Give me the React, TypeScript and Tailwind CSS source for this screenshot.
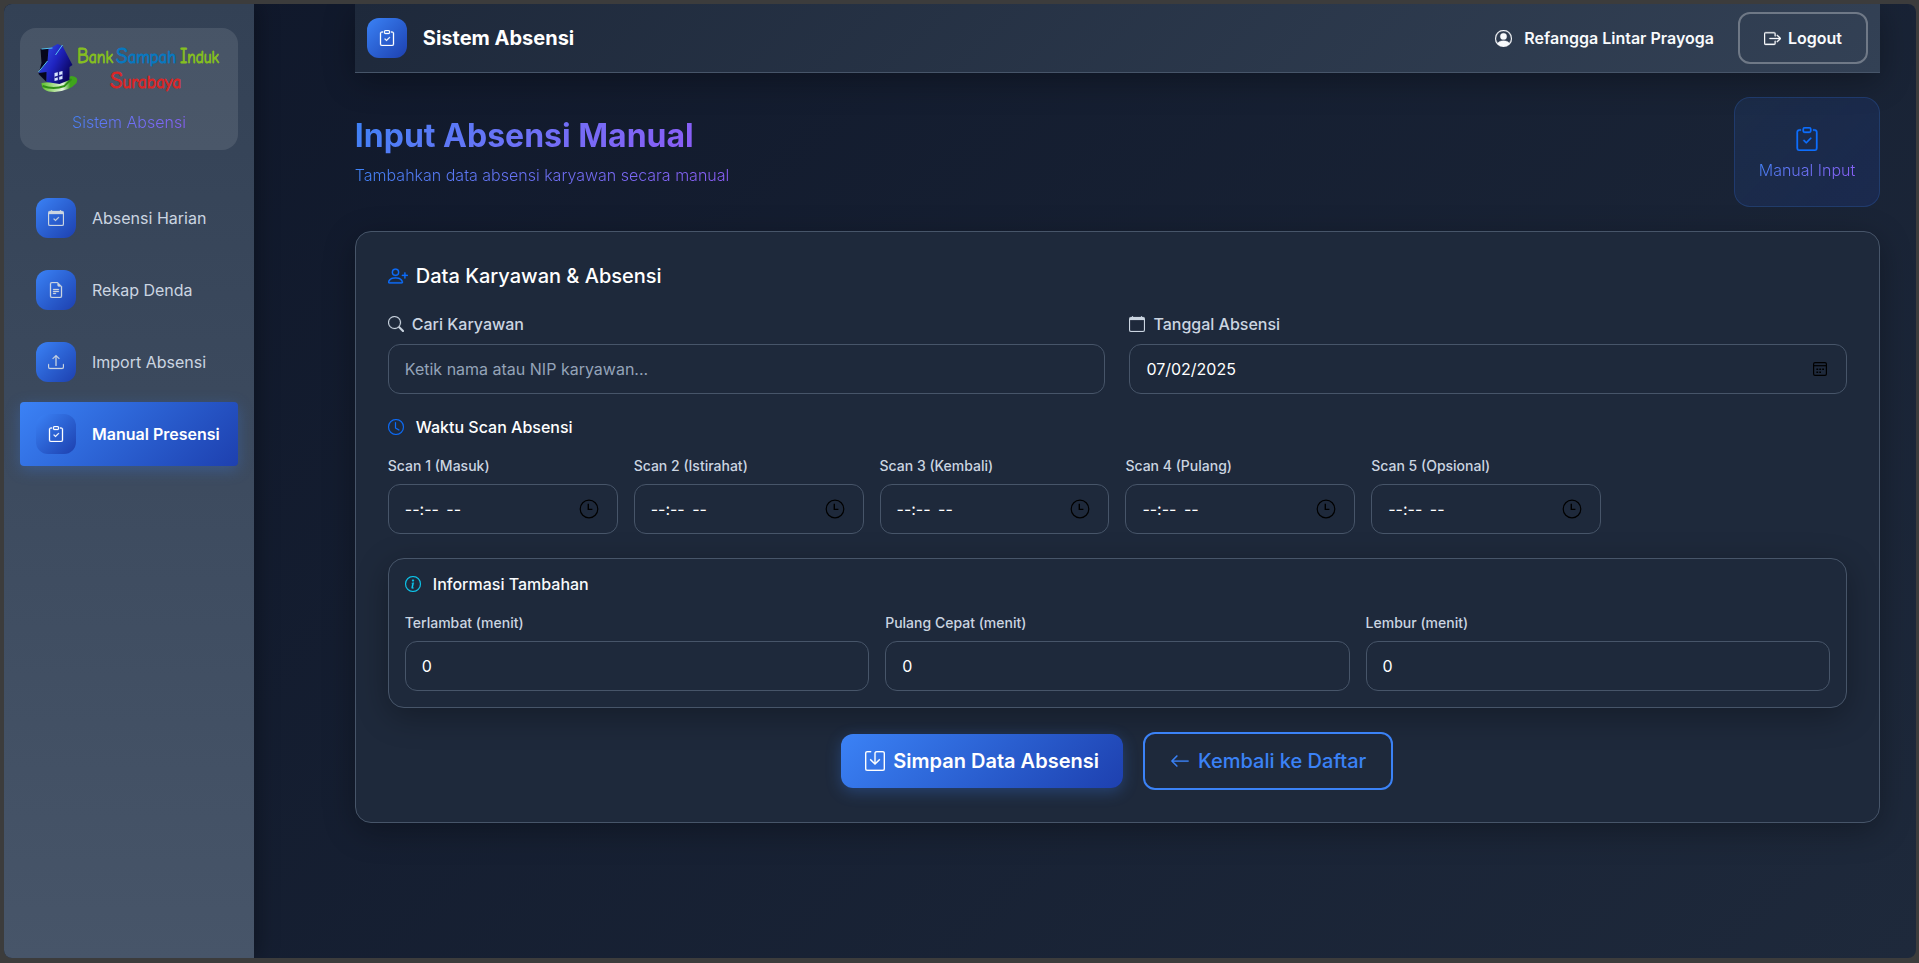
import type { ReactNode } from "react";
import type { IconType } from "react-icons";
import {
  BsArrowLeft,
  BsBoxArrowRight,
  BsCalendar,
  BsCalendarCheck,
  BsClipboardCheck,
  BsClock,
  BsFileEarmarkText,
  BsInfoCircle,
  BsPersonCircle,
  BsPersonPlus,
  BsSave,
  BsSearch,
  BsUpload,
} from "react-icons/bs";

const navItems: { label: string; icon: IconType; active?: boolean }[] = [
  { label: "Absensi Harian", icon: BsCalendarCheck },
  { label: "Rekap Denda", icon: BsFileEarmarkText },
  { label: "Import Absensi", icon: BsUpload },
  { label: "Manual Presensi", icon: BsClipboardCheck, active: true },
];

const scans = [
  "Scan 1 (Masuk)",
  "Scan 2 (Istirahat)",
  "Scan 3 (Kembali)",
  "Scan 4 (Pulang)",
  "Scan 5 (Opsional)",
];

const extras = ["Terlambat (menit)", "Pulang Cepat (menit)", "Lembur (menit)"];

const fieldClass =
  "flex h-[50px] w-full items-center rounded-xl border border-[#475569] bg-[#1e293b] px-4 text-base text-white";

function Logo() {
  return (
    <svg viewBox="0 0 190 54" className="ml-1 h-[54px] w-[190px] overflow-visible">
      <defs>
        <linearGradient id="house" x1="0" y1="0" x2="1" y2="0.6">
          <stop offset="0" stopColor="#3a5cf0" />
          <stop offset="0.55" stopColor="#1f24c0" />
          <stop offset="1" stopColor="#0b0560" />
        </linearGradient>
        <linearGradient id="lawn" x1="0" y1="0" x2="1" y2="0">
          <stop offset="0" stopColor="#5fc02c" />
          <stop offset="0.6" stopColor="#e6f5df" />
          <stop offset="0.8" stopColor="#3fa51c" />
        </linearGradient>
      </defs>
      <g transform="translate(1.5 3)">
        <path d="M4 40 Q4 49 17 49 Q32 48 39 40 Q42 34 34 33 L22 38Z" fill="url(#lawn)" />
        <path d="M5 43 Q16 47 27 43 L34 36" fill="none" stroke="#2f8f17" strokeWidth="2" />
        <path d="M3 6 L12 5 L10 20 L9 39 L1 31 L4 20Z" fill="#06061c" />
        <path d="M11 6 L20 1 L25 3 L35 22 L32 24 L32 37 L22 41 L9 39 L9 29 L1 30 L10 18Z" fill="url(#house)" />
        <path d="M4 6 L15 5 M1 29 L10 18 M18 12 L25 2" fill="none" stroke="#55c3ee" strokeWidth="1" />
        <path d="M17 30 L25 28 L25 36 L17 38Z" fill="#d7e6ff" />
        <path d="M21 28 V38 M17 34.5 L25 32" stroke="#1c1c8c" strokeWidth="1.4" />
      </g>
      <g className="font-['Comic_Neue','Comic_Sans_MS','Lato',cursive]" fontSize="18" strokeWidth="0.9">
        <text x="41" y="22.5" textLength="36" lengthAdjust="spacingAndGlyphs" fill="#86bf1f" stroke="#86bf1f">
          <tspan fontSize="22">B</tspan>ank
        </text>
        <text x="80" y="23" textLength="60" lengthAdjust="spacingAndGlyphs" fill="#0878c0" stroke="#0878c0">
          <tspan fontSize="23">S</tspan>ampah
        </text>
        <text x="144" y="22.5" textLength="39" lengthAdjust="spacingAndGlyphs" fill="#86bf1f" stroke="#86bf1f">
          <tspan fontSize="22">I</tspan>nduk
        </text>
        <text x="74" y="48" textLength="71" lengthAdjust="spacingAndGlyphs" fill="#da2626" stroke="#da2626">
          <tspan fontSize="24">S</tspan>urabaya
        </text>
      </g>
    </svg>
  );
}

function ChromeClock() {
  return (
    <svg viewBox="0 0 20 20" className="size-5 text-black" fill="none" stroke="currentColor">
      <circle cx="10" cy="10" r="8.8" strokeWidth="1.2" />
      <path d="M9.3 4.8 V10.4 H13.4" strokeWidth="1.4" />
    </svg>
  );
}

function ChromeCalendar() {
  return (
    <svg viewBox="0 0 16 16" className="size-4 text-black" fill="none" stroke="currentColor">
      <rect x="1.6" y="1.6" width="12.8" height="12.8" rx="1.4" strokeWidth="1.2" />
      <path d="M2 4.7 H14" strokeWidth="1.2" />
      <path d="M4.4 8.2 H12 M4.4 11.2 H9" strokeWidth="1.5" strokeDasharray="1.8 1.1" />
    </svg>
  );
}

function IconTile({ icon: Icon }: { icon: IconType }) {
  return (
    <span className="flex size-10 shrink-0 items-center justify-center rounded-xl bg-linear-135 from-[#3b82f6] to-[#1e40af]">
      <Icon className="size-4 stroke-[0.3]" />
    </span>
  );
}

function Field({ label, children }: { label: string; children: ReactNode }) {
  return (
    <div className="flex flex-col">
      <div className="mb-2 text-sm leading-[21px] font-medium text-[#cbd5e1]">{label}</div>
      <div className={fieldClass}>{children}</div>
    </div>
  );
}

function Sidebar() {
  return (
    <aside className="w-[250px] shrink-0 bg-linear-to-b from-[#334155] to-[#475569] px-4 pt-6 shadow-[4px_0_20px_rgba(0,0,0,0.3)]">
      <div className="flex h-[122px] flex-col items-center rounded-2xl bg-white/10 pt-3">
        <Logo />
        <div className="mt-4 bg-linear-135 from-[#3b82f6] to-[#8b5cf6] bg-clip-text text-base leading-6 font-light text-transparent">
          Sistem Absensi
        </div>
      </div>
      <nav className="mt-9 flex flex-col gap-2">
        {navItems.map(({ label, icon, active }) => (
          <a
            key={label}
            className={
              active
                ? "flex h-16 items-center gap-4 rounded bg-linear-135 from-[#3b82f6] to-[#1e40af] pl-4 font-semibold whitespace-nowrap text-white shadow-[0_4px_15px_rgba(59,130,246,0.3)]"
                : "flex h-16 items-center gap-4 pl-4 whitespace-nowrap text-[#cbd5e1]"
            }
          >
            <IconTile icon={icon} />
            <span>{label}</span>
          </a>
        ))}
      </nav>
    </aside>
  );
}

function TopBar() {
  return (
    <header className="flex h-[69px] items-center border-b border-[#475569] bg-linear-135 from-[#1e293b] to-[#334155] px-3 text-white shadow-[0_8px_32px_rgba(0,0,0,0.3)]">
      <IconTile icon={BsClipboardCheck} />
      <span className="ml-4 text-xl font-bold">Sistem Absensi</span>
      <div className="ml-auto flex items-center text-[#f8fafc]">
        <BsPersonCircle className="mr-3 size-[17px] stroke-[0.3]" />
        <span className="font-semibold">Refangga Lintar Prayoga</span>
        <button className="ml-6 flex h-[52px] w-[130px] items-center justify-center gap-[7px] rounded-xl border-2 border-white/30 font-semibold">
          <BsBoxArrowRight className="size-[17px] stroke-[0.3]" />
          Logout
        </button>
      </div>
    </header>
  );
}

export default function App() {
  return (
    <div className="h-[963px] w-[1919px] bg-[#3c3c3c] pt-1 pr-[3px] pb-[5px] pl-1 font-['Inter',sans-serif]">
      <div className="flex h-full overflow-hidden rounded-lg bg-linear-135 from-[#0f172a] to-[#1e293b]">
        <Sidebar />
        <main className="ml-[100.8px] w-[1525.2px]">
          <TopBar />

          <div className="mt-6 flex h-[110px] items-center justify-between">
            <div>
              <h1 className="w-fit bg-linear-135 from-[#3b82f6] to-[#8b5cf6] bg-clip-text text-[32px] leading-[38px] font-bold text-transparent">
                Input Absensi Manual
              </h1>
              <p className="mt-2 w-fit bg-linear-135 from-[#3b82f6] to-[#8b5cf6] bg-clip-text leading-6 font-light text-transparent">
                Tambahkan data absensi karyawan secara manual
              </p>
            </div>
            <div className="flex h-[110px] w-[146px] flex-col items-center rounded-2xl border border-[#3b82f6]/20 bg-linear-135 from-[#3b82f6]/10 to-[#1e40af]/20 pt-[29px]">
              <BsClipboardCheck className="size-6 stroke-[0.2] text-[#0d6efd]" />
              <span className="mt-[7px] bg-linear-135 from-[#3b82f6] to-[#8b5cf6] bg-clip-text leading-6 font-light text-transparent">
                Manual Input
              </span>
            </div>
          </div>

          <section className="mt-6 h-[592px] rounded-2xl border border-[#475569] bg-[#1e293b] px-8 pt-8 shadow-[0_8px_32px_rgba(0,0,0,0.3)]">
            <h2 className="flex items-center gap-2 text-xl leading-6 font-medium text-white">
              <BsPersonPlus className="size-5 stroke-[0.2] text-[#0d6efd]" />
              Data Karyawan &amp; Absensi
            </h2>

            <div className="mt-6 grid grid-cols-2 gap-6">
              <div>
                <div className="mb-2 flex items-center gap-2 leading-6 font-medium text-[#cbd5e1]">
                  <BsSearch className="size-4 stroke-[0.2]" />
                  Cari Karyawan
                </div>
                <div className={fieldClass}>
                  <span className="text-[#94a3b8]">Ketik nama atau NIP karyawan...</span>
                </div>
              </div>
              <div>
                <div className="mb-2 flex items-center gap-2 leading-6 font-medium text-[#cbd5e1]">
                  <BsCalendar className="size-4 stroke-[0.2]" />
                  Tanggal Absensi
                </div>
                <div className={fieldClass}>
                  <span className="grow">07/02/2025</span>
                  <span className="mr-[2px]">
                    <ChromeCalendar />
                  </span>
                </div>
              </div>
            </div>

            <h3 className="mt-6 flex items-center gap-3 leading-[19px] font-medium text-white">
              <BsClock className="-mt-px size-4 stroke-[0.2] text-[#0d6efd]" />
              Waktu Scan Absensi
            </h3>
            <div className="mt-[18px] grid w-[1213.3px] grid-cols-5 gap-4">
              {scans.map((label) => (
                <Field key={label} label={label}>
                  <span className="grow whitespace-pre [word-spacing:3px]">--:-- --</span>
                  <span className="mr-[2px]">
                    <ChromeClock />
                  </span>
                </Field>
              ))}
            </div>

            <div className="mt-6 h-[150px] rounded-2xl border border-[#475569] px-4 pt-4 shadow-[0_8px_32px_rgba(0,0,0,0.3)]">
              <h3 className="flex items-center gap-3 leading-[19px] font-medium text-[#f8fafc]">
                <BsInfoCircle className="-mt-px size-4 stroke-[0.2] text-[#0dcaf0]" />
                Informasi Tambahan
              </h3>
              <div className="mt-[18px] grid grid-cols-3 gap-4">
                {extras.map((label) => (
                  <Field key={label} label={label}>
                    0
                  </Field>
                ))}
              </div>
            </div>

            <div className="mt-6 flex items-center justify-center gap-5 text-xl font-semibold">
              <button className="flex h-[54px] w-[282.5px] items-center justify-center gap-2 rounded-xl bg-linear-135 from-[#3b82f6] to-[#1e40af] text-white shadow-[0_4px_15px_rgba(59,130,246,0.3)]">
                <BsSave className="size-5 stroke-[0.2]" />
                Simpan Data Absensi
              </button>
              <button className="mr-px flex h-[58px] w-[249.5px] items-center justify-center gap-2 rounded-xl border-2 border-[#3b82f6] font-medium text-[#3b82f6]">
                <BsArrowLeft className="size-5 stroke-[0.2]" />
                Kembali ke Daftar
              </button>
            </div>
          </section>
        </main>
      </div>
    </div>
  );
}
